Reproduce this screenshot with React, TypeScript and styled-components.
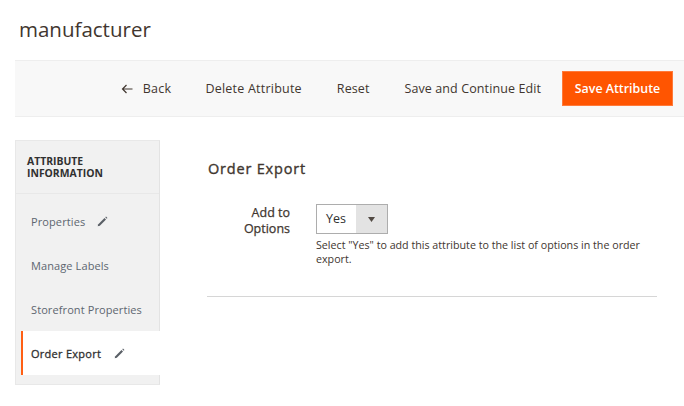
import React from "react";
import styled, { createGlobalStyle } from "styled-components";

const Global = createGlobalStyle`
  html, body { margin: 0; padding: 0; background: #fff; }
  body { font-family: "Open Sans", "Liberation Sans", sans-serif; color: #303030; width: 684px; height: 406px; overflow: hidden; }
`;
const Page = styled.div`
  display: flex;
  flex-direction: column;
`;
const Title = styled.h1`
  margin: 0;
  padding: 0 0 0 19px;
  height: 60px;
  line-height: 59px;
  font-size: 20.5px;
  font-weight: 400;
  color: #41362f;
`;
const Toolbar = styled.div`
  margin-left: 15px;
  height: 57px;
  box-sizing: border-box;
  background: #f8f8f8;
  border-top: 1px solid #eee;
  border-bottom: 1px solid #eee;
  display: flex;
  align-items: center;
  justify-content: flex-end;
  padding-right: 11px;
`;
const ActionLink = styled.span<{ $gap: number; $tracking?: number }>`
  display: inline-flex;
  align-items: center;
  font-size: 12.5px;
  letter-spacing: ${(p) => p.$tracking ?? 0.1}px;
  color: #41362f;
  margin-right: ${(p) => p.$gap}px;
  white-space: nowrap;
`;
const BackIcon = styled.svg`
  width: 12px;
  height: 10px;
  margin-right: 10px;
`;
const PrimaryButton = styled.button`
  width: 111px;
  height: 35px;
  box-sizing: border-box;
  background: #ff5501;
  border: 1px solid #ff7a3a;
  color: #fff;
  font-family: inherit;
  font-size: 12.4px;
  font-weight: 600;
  padding: 0;
`;
const Body = styled.div`
  display: flex;
  margin: 23px 0 0 15px;
`;
const Sidebar = styled.nav`
  width: 145px;
  height: 245px;
  box-sizing: border-box;
  background: #f1f1f1;
  border: 1px solid #e8e8e8;
  border-right: 1px solid #e3e3e3;
  flex-shrink: 0;
`;
const SidebarHeader = styled.div`
  height: 53px;
  box-sizing: border-box;
  padding: 13px 11px 0;
  font-size: 10.4px;
  line-height: 14px;
  font-weight: 700;
  color: #303030;
  border-bottom: 1px solid #e8e8e8;
`;
const HeaderLine = styled.div`
  height: 12px;
  line-height: 14px;
`;
const Items = styled.div`
  padding-top: 5px;
`;
const Item = styled.div<{ $active?: boolean }>`
  height: 44px;
  display: flex;
  align-items: center;
  box-sizing: border-box;
  font-size: 11px;
  letter-spacing: ${(p) => (p.$active ? "0.27px" : "0.1px")};
  margin-left: ${(p) => (p.$active ? "5px" : "0")};
  margin-right: ${(p) => (p.$active ? "-1px" : "0")};
  padding-left: ${(p) => (p.$active ? "8px" : "15px")};
  background: ${(p) => (p.$active ? "#fff" : "transparent")};
  border-left: ${(p) => (p.$active ? "2px solid #ff5f14" : "0")};
  color: ${(p) => (p.$active ? "#303030" : "#5d6670")};
  -webkit-text-stroke: ${(p) => (p.$active ? "0.3px" : "0")};
`;
const Pencil = styled.svg<{ $gap: number }>`
  width: 11px;
  height: 11px;
  margin-left: ${(p) => p.$gap}px;
`;
const Content = styled.main`
  width: 450px;
  margin-left: 47px;
  padding-top: 19px;
`;
const SectionTitle = styled.h2`
  margin: 0 0 25px;
  padding-left: 1px;
  font-size: 14.5px;
  line-height: 20px;
  font-weight: 400;
  -webkit-text-stroke: 0.35px;
  color: #41362f;
  letter-spacing: 0.8px;
`;
const FieldRow = styled.div`
  display: flex;
  padding-bottom: 30px;
  border-bottom: 1px solid #d6d6d6;
`;
const FieldLabel = styled.label`
  width: 83px;
  text-align: right;
  font-size: 12.5px;
  line-height: 16px;
  font-weight: 400;
  -webkit-text-stroke: 0.25px;
  color: #41362f;
  padding-top: 1px;
`;
const FieldControl = styled.div`
  margin-left: 26px;
  flex: 1;
`;
const Select = styled.div`
  width: 72px;
  height: 30px;
  box-sizing: border-box;
  border: 1px solid #adadad;
  display: flex;
  background: #fff;
`;
const SelectValue = styled.span`
  flex: 1;
  font-size: 12.5px;
  line-height: 28px;
  padding-left: 9px;
  color: #303030;
`;
const SelectArrow = styled.span`
  width: 31px;
  background: #e3e3e3;
  border-left: 1px solid #fff;
  display: flex;
  align-items: center;
  justify-content: center;
`;
const Caret = styled.svg`
  width: 7px;
  height: 5px;
`;
const Note = styled.p`
  margin: 4px 0 0;
  font-size: 10.7px;
  line-height: 14px;
  color: #41362f;
`;

const PencilIcon = ({ gap }: { gap: number }) => (
  <Pencil $gap={gap} viewBox="0 0 10 10">
    <path d="M0.6 9.4 L1.2 7.4 L6.8 1.8 L8.2 3.2 L2.6 8.8 Z" fill="#5a5f66" />
    <path d="M7.5 1.1 L8.2 0.5 L9.5 1.8 L8.9 2.5 Z" fill="#5a5f66" />
  </Pencil>
);

export default function App() {
  return (
    <Page>
      <Global />
      <Title>manufacturer</Title>
      <Toolbar>
        <ActionLink $gap={34} $tracking={0.3}>
          <BackIcon viewBox="0 0 12 10">
            <path d="M11.5 5 H1.5 M5.5 1 L1.5 5 L5.5 9" fill="none" stroke="#41362f" strokeWidth="1.2" />
          </BackIcon>
          Back
        </ActionLink>
        <ActionLink $gap={35} $tracking={0.22}>Delete Attribute</ActionLink>
        <ActionLink $gap={35}>Reset</ActionLink>
        <ActionLink $gap={21}>Save and Continue Edit</ActionLink>
        <PrimaryButton>Save Attribute</PrimaryButton>
      </Toolbar>
      <Body>
        <Sidebar>
          <SidebarHeader>
            <HeaderLine>ATTRIBUTE</HeaderLine>
            <HeaderLine>INFORMATION</HeaderLine>
          </SidebarHeader>
          <Items>
            <Item>Properties<PencilIcon gap={12} /></Item>
            <Item>Manage Labels</Item>
            <Item>Storefront Properties</Item>
            <Item $active>Order Export<PencilIcon gap={13} /></Item>
          </Items>
        </Sidebar>
        <Content>
          <SectionTitle>Order Export</SectionTitle>
          <FieldRow>
            <FieldLabel>Add to Options</FieldLabel>
            <FieldControl>
              <Select>
                <SelectValue>Yes</SelectValue>
                <SelectArrow>
                  <Caret viewBox="0 0 7 5"><path d="M0 0 H7 L3.5 5 Z" fill="#514943" /></Caret>
                </SelectArrow>
              </Select>
              <Note>Select "Yes" to add this attribute to the list of options in the order export.</Note>
            </FieldControl>
          </FieldRow>
        </Content>
      </Body>
    </Page>
  );
}
